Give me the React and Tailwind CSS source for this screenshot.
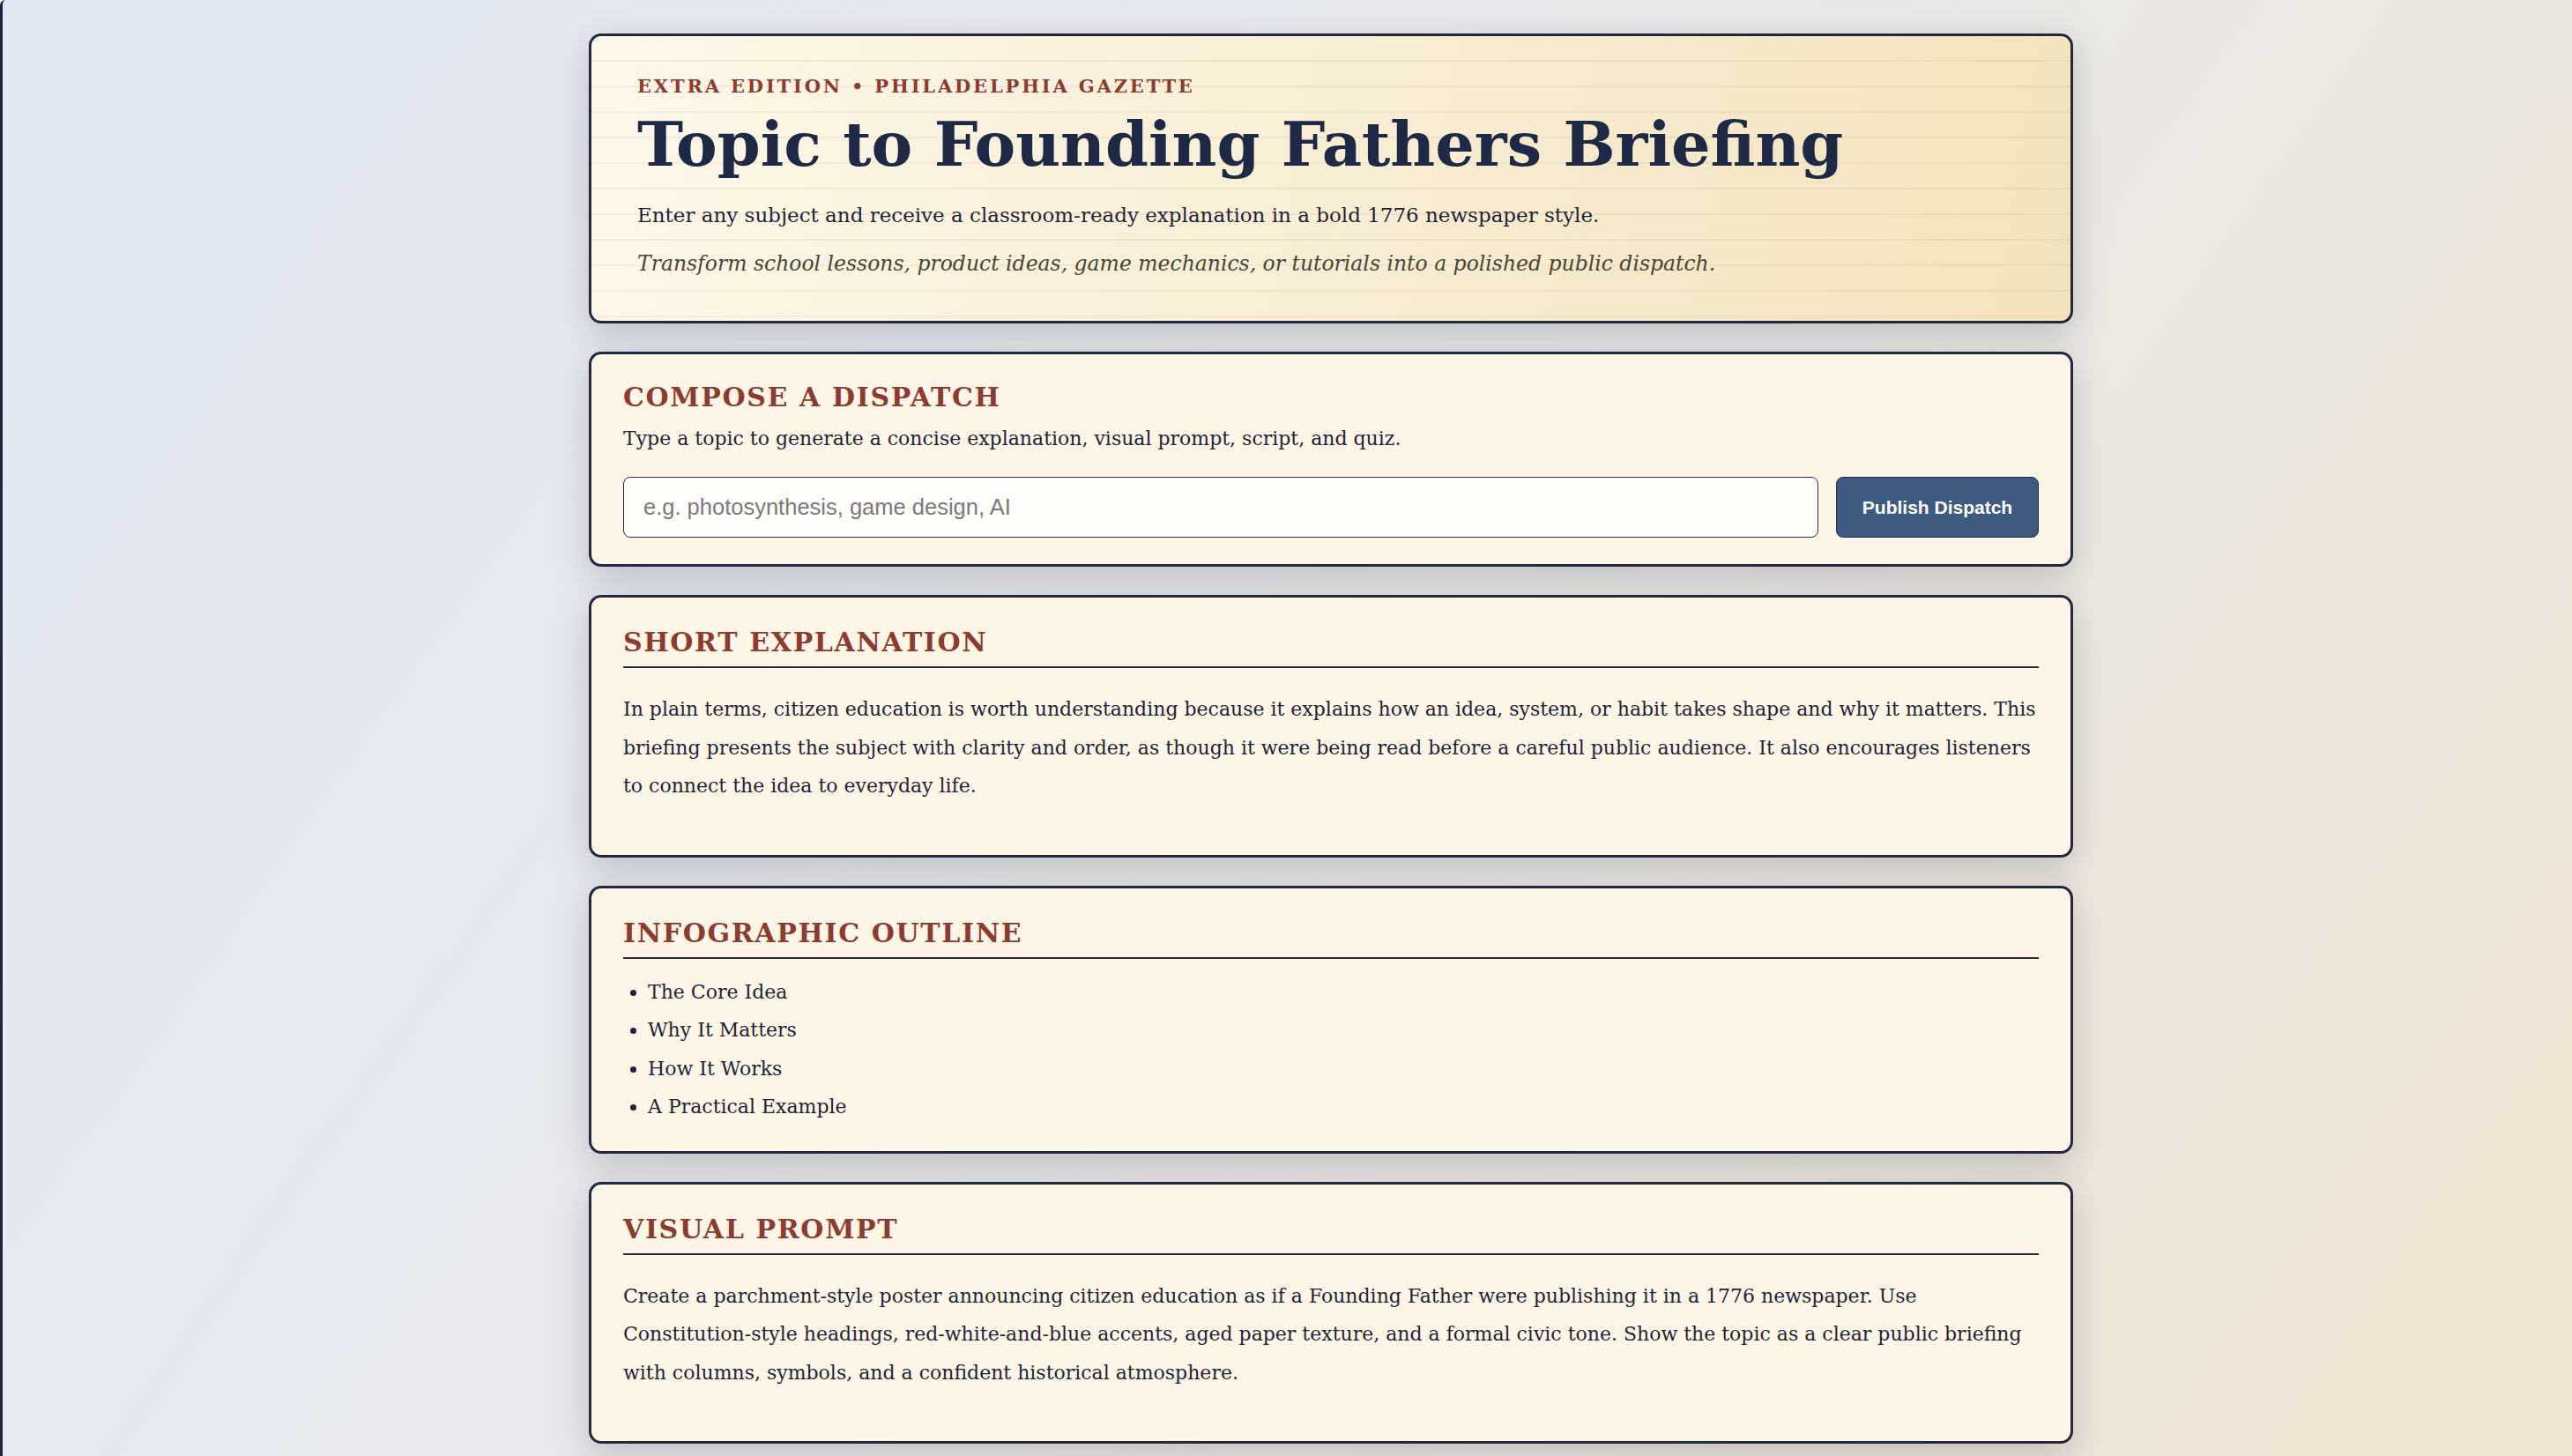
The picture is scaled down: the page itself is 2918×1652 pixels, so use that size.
import React, { useState } from 'react';

const outline = ['The Core Idea', 'Why It Matters', 'How It Works', 'A Practical Example'];

const Heading = ({ children }) => (
  <h2 className="text-[30px] leading-[36px] font-bold tracking-[0.055em] uppercase text-[#8e3b2f] pb-[9px] border-b-2 border-[#262b3a] mb-[16px]">
    {children}
  </h2>
);

const Card = ({ children, className = '' }) => (
  <section
    className={`border-[3px] border-[#23283d] rounded-[14px] bg-[#fdf6e7] shadow-[0_12px_40px_rgba(40,45,60,0.22)] ${className}`}
  >
    {children}
  </section>
);

const App = () => {
  const [topic, setTopic] = useState('');

  return (
    <div className="min-h-screen border-l-[3px] border-[#20233a] rounded-tl-[6px] bg-[linear-gradient(125deg,#e1e8f3_0%,#e6e9ef_35%,#ece8e2_65%,#efe4d1_100%)] pl-[99px] pb-[60px] font-['DejaVu_Serif',serif] text-[#1f2435]">
      <main className="mx-auto w-[1684px] pt-[38px] flex flex-col gap-[32px]">
        {/* masthead */}
        <header className="border-[3px] border-[#23283d] rounded-[14px] shadow-[0_12px_40px_rgba(40,45,60,0.22)] pl-[52px] pr-[40px] pt-[43px] pb-[47px] [background-image:repeating-linear-gradient(180deg,transparent_0px,transparent_27px,rgba(150,120,70,0.08)_27px,rgba(150,120,70,0.08)_29px),linear-gradient(100deg,#fdf8ea_0%,#f8eed4_50%,#f3e3bc_100%)]">
          <p className="text-[21px] leading-[28px] font-bold tracking-[0.135em] uppercase text-[#8e3b2f]">
            Extra Edition • Philadelphia Gazette
          </p>
          <h1 className="text-[70px] leading-[76px] font-bold text-[#1e2945] mt-[14px]">
            Topic to Founding Fathers Briefing
          </h1>
          <p className="text-[23px] leading-[36px] mt-[24px] text-[#1f2435]">
            Enter any subject and receive a classroom-ready explanation in a bold 1776 newspaper style.
          </p>
          <p className="text-[23.5px] leading-[36px] mt-[19px] italic text-[#4a4536]">
            Transform school lessons, product ideas, game mechanics, or tutorials into a polished public dispatch.
          </p>
        </header>

        {/* composer */}
        <Card className="px-[36px] pt-[31px] pb-[30px]">
          <h2 className="text-[30px] leading-[36px] font-bold tracking-[0.055em] uppercase text-[#8e3b2f]">
            Compose a Dispatch
          </h2>
          <p className="text-[22px] leading-[34px] mt-[12px]">
            Type a topic to generate a concise explanation, visual prompt, script, and quiz.
          </p>
          <div className="flex gap-[20px] mt-[26px]">
            <input
              type="text"
              value={topic}
              onChange={(e) => setTopic(e.target.value)}
              placeholder="e.g. photosynthesis, game design, AI"
              className="flex-1 h-[69px] px-[22px] rounded-[8px] border border-[#2a2f45] bg-[#fffdf8] font-['Liberation_Sans',Arial,sans-serif] text-[25.5px] text-[#1f2435] placeholder:text-[#7a7a7a] focus:outline-none"
            />
            <button className="h-[69px] w-[230px] rounded-[8px] border border-[#1f2a44] bg-[#3d5a80] text-white font-bold text-[21px] font-['Liberation_Sans',Arial,sans-serif]">
              Publish Dispatch
            </button>
          </div>
        </Card>

        <Card className="px-[36px] pt-[33px] pb-[32px]">
          <Heading>Short Explanation</Heading>
          <p className="text-[22px] leading-[43.5px] mt-[25px] mb-[24px]">
            In plain terms, citizen education is worth understanding because it explains how an idea, system, or habit takes shape and why it matters. This briefing presents the subject with clarity and order, as though it were being read before a careful public audience. It also encourages listeners to connect the idea to everyday life.
          </p>
        </Card>

        <Card className="px-[36px] pt-[33px] pb-[28px]">
          <Heading>Infographic Outline</Heading>
          <ul className="list-disc pl-[28px] text-[22px] leading-[43.5px]">
            {outline.map((item) => (
              <li key={item}>{item}</li>
            ))}
          </ul>
        </Card>

        <Card className="px-[36px] pt-[33px] pb-[32px]">
          <Heading>Visual Prompt</Heading>
          <p className="text-[22px] leading-[43.5px] mt-[25px] mb-[24px]">
            Create a parchment-style poster announcing citizen education as if a Founding Father were publishing it in a 1776 newspaper. Use Constitution-style headings, red-white-and-blue accents, aged paper texture, and a formal civic tone. Show the topic as a clear public briefing with columns, symbols, and a confident historical atmosphere.
          </p>
        </Card>
      </main>
    </div>
  );
};

export default App;
